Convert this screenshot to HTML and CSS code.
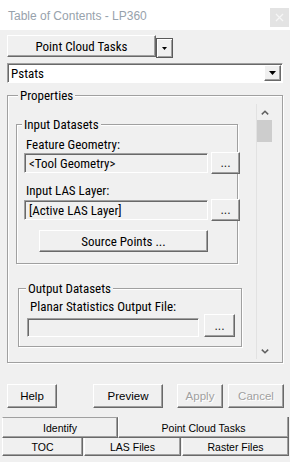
FILE: index.html
```html
<!DOCTYPE html>
<html>
<head>
<meta charset="utf-8">
<title>Table of Contents - LP360</title>
<link rel="stylesheet" href="styles.css">
</head>
<body>
  <div class="titlebar">
    <span class="title">Table of Contents - LP360</span>
    <span class="close"><svg width="9" height="9" viewBox="0 0 9 9"><path d="M1 1L8 8M8 1L1 8" stroke="#f6f6f6" stroke-width="1.2" fill="none"/></svg></span>
  </div>

  <div class="tasks-row">
    <button class="btn tasks-btn">Point Cloud Tasks</button>
    <button class="btn drop-btn"><svg width="5" height="3" viewBox="0 0 5 3"><path d="M0 0H5L2.5 3Z" fill="#000"/></svg></button>
  </div>

  <div class="combo">
    <span class="combo-text">Pstats</span>
    <span class="btn combo-arrow"><svg width="7" height="4" viewBox="0 0 7 4"><path d="M0 0H7L3.5 4Z" fill="#000"/></svg></span>
  </div>

  <fieldset class="group props">
    <legend>Properties</legend>
    <div class="props-body">
      <div class="scroll-content">
        <fieldset class="group input-group">
          <legend>Input Datasets</legend>
          <div class="field-label lbl1">Feature Geometry:</div>
          <div class="field-row">
            <div class="textbox">&lt;Tool Geometry&gt;</div>
            <button class="btn dots">...</button>
          </div>
          <div class="field-label lbl2">Input LAS Layer:</div>
          <div class="field-row row2">
            <div class="textbox">[Active LAS Layer]</div>
            <button class="btn dots">...</button>
          </div>
          <button class="btn source-btn">Source Points ...</button>
        </fieldset>

        <fieldset class="group output-group">
          <legend>Output Datasets</legend>
          <div class="field-label lbl3">Planar Statistics Output File:</div>
          <div class="field-row out-row">
            <div class="textbox out-box"></div>
            <button class="btn dots out-dots">...</button>
          </div>
        </fieldset>
      </div>
      <div class="scrollbar">
        <div class="sb-btn"><svg width="8" height="5" viewBox="0 0 8 5"><path d="M0.8 4.4L4 1.2L7.2 4.4" stroke="#606060" stroke-width="1.5" fill="none"/></svg></div>
        <div class="sb-track"><div class="sb-thumb"></div></div>
        <div class="sb-btn"><svg width="8" height="5" viewBox="0 0 8 5"><path d="M0.8 0.6L4 3.8L7.2 0.6" stroke="#606060" stroke-width="1.5" fill="none"/></svg></div>
      </div>
    </div>
  </fieldset>

  <div class="actions">
    <button class="btn act help">Help</button>
    <button class="btn act preview">Preview</button>
    <button class="btn act apply disabled">Apply</button>
    <button class="btn act cancel disabled">Cancel</button>
  </div>

  <div class="tabs">
    <div class="tab-row">
      <div class="tab tab-identify">Identify</div>
      <div class="tab tab-active">Point Cloud Tasks</div>
    </div>
    <div class="tab-row tab-row2">
      <div class="tab tab-toc">TOC</div>
      <div class="tab tab-las">LAS Files</div>
      <div class="tab tab-raster">Raster Files</div>
    </div>
  </div>
</body>
</html>
```

FILE: styles.css
```css
* { box-sizing: border-box; }
html, body { margin: 0; padding: 0; }
body {
  width: 290px;
  height: 462px;
  overflow: hidden;
  background: #f0f0f0;
  font-family: Roboto, "Liberation Sans", Arial, sans-serif;
  font-stretch: 75%;
  font-size: 13px;
  color: #000;
}

/* title bar */
.titlebar {
  height: 30px;
  background: #fff;
  display: flex;
  justify-content: space-between;
  align-items: flex-start;
}
.title {
  font-family: "Liberation Sans", Arial, sans-serif;
  font-stretch: normal;
  font-size: 12px;
  line-height: 14px;
  color: #97a2ac;
  padding: 9px 0 0 8px;
}
.close {
  width: 19px;
  height: 19px;
  margin: 8px 1px 0 0;
  background: #e3e3e3;
  display: flex;
  align-items: center;
  justify-content: center;
}

/* generic raised button */
.btn {
  font: inherit;
  color: #000;
  background: #f0f0f0;
  border: 1px solid;
  border-color: #fff #696969 #696969 #fff;
  box-shadow: inset -1px -1px 0 #a0a0a0;
  padding: 0;
  margin: 0;
  display: flex;
  align-items: center;
  justify-content: center;
  white-space: nowrap;
}

.tasks-row {
  display: flex;
  height: 22px;
  margin: 5px 0 0 7px;
}
.tasks-btn { width: 149px; height: 22px; }
.drop-btn {
  width: 17px;
  height: 20px;
  margin: 3px 0 0 0;
  border: 1px solid #5a5a5a;
  box-shadow: inset 1px 1px 0 #fff, inset -1px -1px 0 #a0a0a0;
}

/* combo */
.combo {
  margin: 6px 0 0 7px;
  width: 276px;
  height: 20px;
  background: #fff;
  border: 1px solid;
  border-color: #a0a0a0 #fff #fff #a0a0a0;
  box-shadow: inset 1px 1px 0 #696969;
  display: flex;
  align-items: center;
  justify-content: space-between;
  padding: 0 1px 0 3px;
}
.combo-arrow { width: 17px; height: 16px; }

/* group boxes */
.group {
  margin: 0;
  padding: 0;
  min-width: 0;
  border: 1px solid #a0a0a0;
  box-shadow: 1px 1px 0 #fff, inset 1px 1px 0 #fff;
}
.group > legend {
  padding: 0 2px;
  line-height: 15px;
  height: 15px;
  background: #f0f0f0;
  white-space: nowrap;
}

.props {
  margin: 5px 0 0 7px;
  width: 276px;
  padding: 0 10px 3px 8px;
}
.props > legend { margin-left: 2px; }
.props-body {
  display: flex;
  height: 255px;
  margin-top: 1px;
}
.scroll-content {
  flex: 1;
  min-width: 0;
  overflow: hidden;
}

.scrollbar {
  width: 16px;
  border-left: 1px solid #e2e2e2;
  display: flex;
  flex-direction: column;
}
.sb-btn {
  height: 16px;
  display: flex;
  align-items: center;
  justify-content: center;
}
.sb-track { flex: 1; }
.sb-thumb { height: 22px; background: #cdcdcd; }

.input-group {
  margin-top: 13px;
  width: 222px;
  padding: 0 0 11px 7px;
}
.input-group > legend { margin-left: -2px; }

.field-label {
  line-height: 15px;
  height: 15px;
  margin-left: 2px;
  white-space: nowrap;
}
.lbl1 { margin-top: 5px; }
.lbl2 { margin-top: 9px; }

.field-row {
  display: flex;
  align-items: center;
  height: 22px;
}
.row2 { margin-top: 1px; }

.textbox {
  width: 184px;
  height: 20px;
  border: 1px solid;
  border-color: #a0a0a0 #fff #fff #a0a0a0;
  box-shadow: inset 1px 1px 0 #696969;
  padding-left: 4px;
  display: flex;
  align-items: center;
  white-space: nowrap;
  overflow: hidden;
  flex: none;
}
.dots {
  flex: none;
  width: 29px;
  height: 22px;
  margin-left: 3px;
  font-family: "Liberation Sans", Arial, sans-serif;
  font-stretch: normal;
  font-size: 12px;
  color: #222;
}
.source-btn {
  width: 169px;
  height: 22px;
  margin: 9px 0 0 15px;
}

.output-group {
  margin: 17px 0 0 2px;
  width: 224px;
  padding: 0 0 9px 8px;
}
.output-group > legend { margin-left: -1px; }
.lbl3 { margin-top: 3px; margin-left: 3px; }
.out-row {
  align-items: flex-end;
  height: 23px;
}
.out-box { width: 172px; height: 19px; }
.out-dots { width: 31px; height: 23px; margin-left: 5px; }

/* action buttons */
.actions {
  display: flex;
  height: 24px;
  margin-top: 21px;
}
.act {
  height: 24px;
  font-family: "Liberation Sans", Arial, sans-serif;
  font-stretch: normal;
  font-size: 11.5px;
}
.help { margin-left: 7px; width: 50px; }
.preview { margin-left: 36px; width: 70px; }
.apply { margin-left: 14px; width: 46px; }
.cancel { margin-left: 5px; width: 56px; }
.disabled { color: #a0a0a0; text-shadow: 1px 1px 0 #fff; }

/* tabs */
.tabs { margin-top: 9px; }
.tab-row { display: flex; }
.tab {
  font-family: "Liberation Sans", Arial, sans-serif;
  font-stretch: normal;
  font-size: 10.5px;
  display: flex;
  align-items: center;
  justify-content: center;
  border-left: 1px solid #fff;
  border-right: 1px solid #696969;
  border-bottom: 1px solid #696969;
  box-shadow: inset -1px -1px 0 #a0a0a0;
  white-space: nowrap;
}
.tab-identify {
  margin-left: 2px;
  width: 116px;
  height: 21px;
  border-top: 1px solid #a0a0a0;
}
.tab-active {
  width: 171px;
  height: 21px;
  padding-top: 2px;
}
.tab-row2 { gap: 1px; margin-left: 2px; }
.tab-row2 .tab { height: 18px; }
.tab-toc { width: 81px; }
.tab-las { width: 97px; }
.tab-raster { width: 107px; }
```
